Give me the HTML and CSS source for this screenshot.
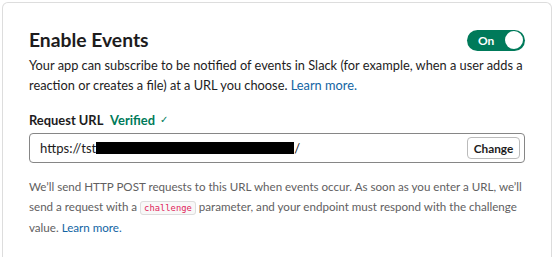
FILE: index.html
```html
<!DOCTYPE html>
<html>
<head>
<meta name="viewport" content="width=device-width, initial-scale=1">
<link rel="stylesheet" href="styles.css">
</head>
<body>

<div class="card">
  <div class="card-head">
    <h2 class="title">Enable Events</h2>
    <span class="toggle"><span class="toggle-label">On</span><span class="knob"></span></span>
  </div>
  <p class="desc">Your app can subscribe to be notified of events in Slack (for example, when a user adds a reaction or creates a file) at a URL you choose. <a href="#">Learn more.</a></p>

  <div class="field-label">Request URL <span class="verified">Verified <span class="check">&#10003;</span></span></div>
  <div class="url-box">
    <span class="url">https://tst<span class="redact"></span>/</span>
    <button class="change">Change</button>
  </div>

  <p class="help">We&rsquo;ll send HTTP POST requests to this URL when events occur. As soon as you enter a URL, we&rsquo;ll send a request with a <code>challenge</code> parameter, and your endpoint must respond with the challenge value. <a href="#">Learn more.</a></p>
</div>

</body>
</html>
```

FILE: styles.css
```css
body {
  margin: 0;
  padding: 2px 3px 0 2px;
  font-family: Lato, "Open Sans", sans-serif;
  color: #1d1c1d;
  background: #fff;
}

.card {
  border: 1px solid #ddd;
  border-bottom: none;
  border-radius: 6px 6px 0 0;
  padding: 22px 26px 40px 26px;
  height: 260px;
  box-sizing: border-box;
}

.card-head {
  display: flex;
  justify-content: space-between;
  align-items: center;
}

.title {
  margin: 0;
  font-size: 19.3px;
  font-weight: 700;
  line-height: 30px;
}

.toggle {
  display: flex;
  align-items: center;
  justify-content: space-between;
  width: 58px;
  height: 21px;
  box-sizing: border-box;
  padding: 0 2px 0 11px;
  border-radius: 11px;
  background: #007a5a;
}

.toggle-label {
  color: #fff;
  font-size: 12px;
  font-weight: 700;
}

.knob {
  width: 18px;
  height: 18px;
  border-radius: 50%;
  background: #fff;
}

.desc {
  margin: 1px 0 0 0;
  font-size: 12.8px;
  line-height: 19.5px;
}

a {
  color: #1264a3;
  text-decoration: none;
}

.field-label {
  margin-top: 14px;
  font-size: 12.9px;
  font-weight: 700;
  line-height: 20px;
}

.verified {
  margin-left: 4px;
  color: #007a5a;
}

.check {
  font-size: 10px;
  font-weight: 400;
  margin-left: 2px;
  vertical-align: 2px;
}

.url-box {
  display: flex;
  align-items: center;
  justify-content: space-between;
  margin-top: 3px;
  height: 30px;
  box-sizing: border-box;
  border: 1px solid #868686;
  border-radius: 4px;
  padding: 0 4px 0 10px;
}

.url {
  font-size: 13.1px;
  color: #1d1c1d;
  display: flex;
  align-items: center;
}

.redact {
  display: inline-block;
  width: 198px;
  height: 12px;
  background: #000;
}

.change {
  font-family: inherit;
  font-size: 11.8px;
  font-weight: 700;
  color: #1d1c1d;
  background: #fff;
  border: 1px solid #bbb;
  border-radius: 4px;
  height: 22px;
  width: 53px;
  padding: 0;
}

.help {
  margin: 14px 0 0 0;
  font-size: 11.6px;
  line-height: 20px;
  color: #616061;
}

code {
  font-family: "DejaVu Sans Mono", monospace;
  font-size: 8.8px;
  color: #e01e5a;
  background: #f8f8f8;
  border: 1px solid #ddd;
  border-radius: 3px;
  padding: 1px 3px;
}
```
